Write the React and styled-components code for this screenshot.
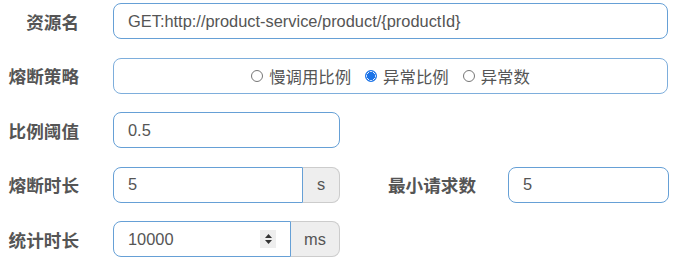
import React from "react";
import styled, { createGlobalStyle } from "styled-components";

const Global = createGlobalStyle`
  html, body { margin: 0; padding: 0; background: #fff; }
  body { font-family: "Liberation Sans", Arial, "Noto Sans CJK SC", sans-serif; color: #555; }
  * { box-sizing: border-box; }
`;

const Form = styled.div`
  display: flex;
  flex-direction: column;
  gap: 18.5px;
  padding: 3px 0 0 0;
  width: 693px;
`;

const Row = styled.div`
  display: flex;
  align-items: center;
  height: 36px;
`;

const Label = styled.div`
  width: ${(p) => p.$w || 79}px;
  text-align: right;
  font-family: "Noto Sans CJK SC", sans-serif;
  font-weight: 700;
  font-size: 17.6px;
  color: #555;
  margin-right: ${(p) => p.$mr ?? 34}px;
  flex-shrink: 0;
`;

const Input = styled.div`
  width: ${(p) => p.$w}px;
  height: 36px;
  border: 1px solid #66a0d6;
  border-radius: ${(p) => (p.$addon ? "8px 0 0 8px" : "8px")};
  display: flex;
  align-items: center;
  padding: 0 14px 0 14px;
  font-size: 16.4px;
  color: #555;
  background: #fff;
  flex-shrink: 0;
`;

const Value = styled.span`
  flex: 1;
`;

const Addon = styled.div`
  width: ${(p) => p.$w}px;
  height: 36px;
  border: 1px solid #ccc;
  border-left: none;
  border-radius: 0 8px 8px 0;
  background: #eee;
  display: flex;
  align-items: center;
  justify-content: center;
  font-size: 16.4px;
  color: #555;
  flex-shrink: 0;
`;

const Radios = styled.div`
  width: 555px;
  height: 36px;
  border: 1px solid #7eaedc;
  border-radius: 8px;
  display: flex;
  align-items: center;
  justify-content: center;
  gap: 14px;
  font-family: "Noto Sans CJK SC", sans-serif;
  font-size: 16.4px;
  color: #555;
`;

const RadioItem = styled.label`
  display: flex;
  align-items: center;
  gap: 6px;
`;

const Circle = styled.span`
  width: 12px;
  height: 12px;
  border-radius: 50%;
  border: 1px solid ${(p) => (p.$on ? "#1a73e8" : "#767676")};
  background: ${(p) =>
    p.$on
      ? "radial-gradient(circle, #1a73e8 0 3.8px, #e8f0fd 4.3px 4.5px, #1a73e8 4.9px)"
      : "#fff"};
  flex-shrink: 0;
`;

const Spinner = styled.span`
  width: 16px;
  height: 18px;
  background: #eee;
  display: flex;
  align-items: center;
  justify-content: center;
`;

const Radio = ({ on, children }) => (
  <RadioItem>
    <Circle $on={on} />
    {children}
  </RadioItem>
);

export default function App() {
  return (
    <>
      <Global />
      <Form>
        <Row>
          <Label>资源名</Label>
          <Input $w={555}>
            <Value>GET:http://product-service/product/{"{productId}"}</Value>
          </Input>
        </Row>
        <Row>
          <Label>熔断策略</Label>
          <Radios>
            <Radio>慢调用比例</Radio>
            <Radio on>异常比例</Radio>
            <Radio>异常数</Radio>
          </Radios>
        </Row>
        <Row>
          <Label>比例阈值</Label>
          <Input $w={227}>
            <Value>0.5</Value>
          </Input>
        </Row>
        <Row>
          <Label>熔断时长</Label>
          <Input $w={190} $addon>
            <Value>5</Value>
          </Input>
          <Addon $w={37}>s</Addon>
          <Label $w={136} $mr={32}>最小请求数</Label>
          <Input $w={161}>
            <Value>5</Value>
          </Input>
        </Row>
        <Row>
          <Label>统计时长</Label>
          <Input $w={178} $addon>
            <Value>10000</Value>
            <Spinner>
              <svg width="9" height="12" viewBox="0 0 9 12">
                <path d="M4.5 1 L8 5 H1 Z M4.5 11 L8 7 H1 Z" fill="#333" />
              </svg>
            </Spinner>
          </Input>
          <Addon $w={49}>ms</Addon>
        </Row>
      </Form>
    </>
  );
}
